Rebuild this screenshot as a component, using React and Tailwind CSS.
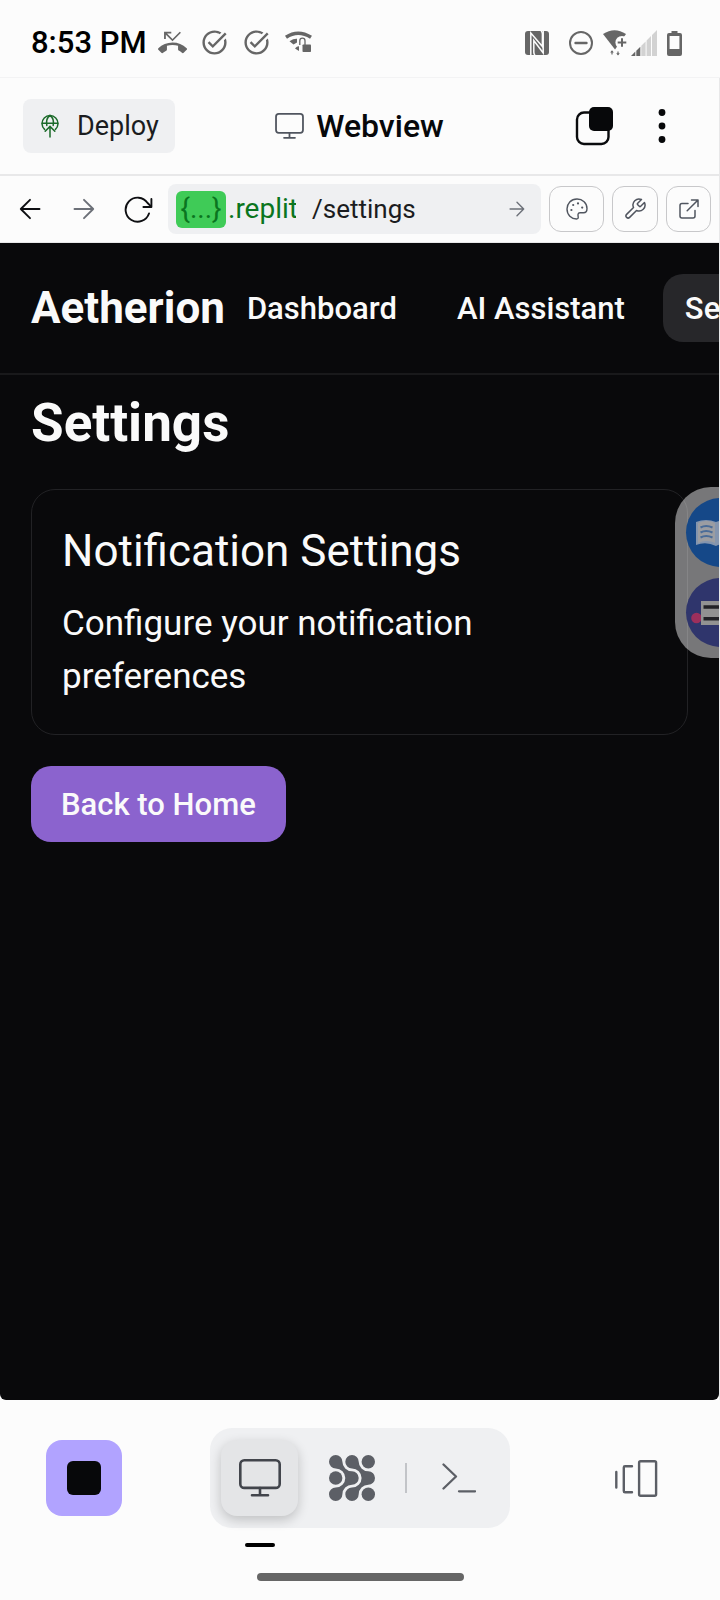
import React from "react";
import { MdPhoneMissed, MdTaskAlt } from "react-icons/md";

function WifiLockIcon() {
  return (
    <svg className="size-[29px]" viewBox="0 0 29 29" fill="none" aria-hidden="true">
      <path d="M2 9.3Q14 1.200 27 9.3" stroke="#666" strokeWidth="3.600" />
      <path d="M5.5 13.2Q9.500 10.6 13 10.8L13 14.500L9.5 16.5Z" fill="#666" />
      <path d="M11 20.5Q13 18 15 18.2V23Z" fill="#666" />
      <path d="M15.800 17V12.8A2.6 2.6 0 0 1 21 12.8V18" stroke="#666" strokeWidth="1.3" />
      <rect x="18.500" y="16.500" width="8.500" height="7.5" rx="0.8" fill="#666" />
    </svg>
  );
}

function NfcIcon() {
  return (
    <svg className="size-6" viewBox="0 0 24 24" aria-hidden="true">
      <rect width="24" height="24" rx="3" fill="#666" />
      <g fill="none" stroke="#fcfcfc" strokeWidth="1.5">
        <path d="M5.800 24V2L17.400 15.500V3Q17.400 1 16 0" />
        <path d="M18.200 0V22L8.800 9.500V21Q8.800 23 10 24" />
      </g>
    </svg>
  );
}

function DndIcon() {
  return (
    <svg className="size-6" viewBox="0 0 24 24" fill="none" stroke="#666" aria-hidden="true">
      <circle cx="12" cy="12" r="11" strokeWidth="2" />
      <path d="M6.5 12H17.5" strokeWidth="2.4" strokeLinecap="round" />
    </svg>
  );
}

function WifiPlusIcon() {
  return (
    <svg className="h-[26px] w-6" viewBox="0 0 24 26" aria-hidden="true">
      <path d="M0 4Q11.5 -3.6 23 4L12 19.5Z" fill="#666" />
      <circle cx="19" cy="12.5" r="6.6" fill="#fcfcfc" />
      <path d="M19 8.2V16.8M14.7 12.5H23.3" stroke="#666" strokeWidth="2" />
      <path d="M9 24.5V21.5M15 21.5V24.5" stroke="#666" strokeWidth="1.2" />
      <path d="M7.2 22.5L9 20.3L10.8 22.5ZM13.2 23.3L15 25.5L16.8 23.3Z" fill="#666" />
    </svg>
  );
}

function SignalIcon() {
  return (
    <svg className="h-[26px] w-[26px]" viewBox="0 0 26 26" aria-hidden="true">
      <path d="M0 26L4.3 21.6V26Z" fill="#666" />
      <path d="M5.3 20.7L9.3 16.7V26H5.3Z" fill="#666" />
      <path d="M10.3 15.700L14.6 11.4V26H10.3ZM15.600 10.400L20 6V26H15.600ZM21 5L26 0V26H21Z" fill="#d2d2d2" />
    </svg>
  );
}

function BatteryIcon() {
  return (
    <svg className="h-[26px] w-[15px]" viewBox="0 0 15 26" aria-hidden="true">
      <path d="M4.5 1H10.5V3H13A2 2 0 0 1 15 5V24A2 2 0 0 1 13 26H2A2 2 0 0 1 0 24V5A2 2 0 0 1 2 3H4.5Z" fill="#666" />
      <rect x="2.6" y="6" width="9.8" height="13" fill="#fcfcfc" />
    </svg>
  );
}

function DeployIcon() {
  return (
    <svg className="h-6 w-[18px]" viewBox="0 0 18 24" fill="none" stroke="#1b6a2a" strokeWidth="1.5" strokeLinecap="round" aria-hidden="true">
      <path d="M3.6 15.4A8 8 0 1 1 14.4 15.4" />
      <path d="M1.2 9.2H16.8M5.8 11.5C5 6.5 6.6 3 9 1.5C11.4 3 13 6.5 12.2 11.5" />
      <path d="M9 23V12.6M4.2 17.2L9 12.4L13.8 17.2" />
    </svg>
  );
}

function MonitorIcon({ className }) {
  return (
    <svg className={className} viewBox="0 0 42 38" fill="none" stroke="currentColor" strokeLinecap="round" aria-hidden="true">
      <rect x="1.3" y="1.3" width="39.4" height="27.6" rx="4" strokeWidth="2.6" />
      <path d="M21 29V36M13 36.2H29" strokeWidth="2.6" />
    </svg>
  );
}

function TabsIcon() {
  return (
    <svg className="h-[39px] w-[39px]" viewBox="0 0 39 39" aria-hidden="true">
      <rect x="2" y="5.5" width="31.5" height="31.5" rx="7" fill="none" stroke="#0a0b0d" strokeWidth="2.4" />
      <rect x="14" y="0" width="24" height="24" rx="5" fill="#07080a" />
    </svg>
  );
}

function ArrowIcon({ className, flip }) {
  return (
    <svg className={className} viewBox="0 0 22 22" fill="none" stroke="currentColor" strokeWidth="1.9" strokeLinecap="round" strokeLinejoin="round" aria-hidden="true">
      <path d={flip ? "M20.5 11H1.8M11 1.8L1.8 11L11 20.2" : "M1.5 11H20.2M11 1.8L20.2 11L11 20.2"} />
    </svg>
  );
}

function ReloadIcon() {
  return (
    <svg className="h-[27px] w-[29px]" viewBox="0 0 29 27" fill="none" stroke="#0e0f12" strokeWidth="1.9" strokeLinecap="round" strokeLinejoin="round" aria-hidden="true">
      <path d="M25 17.5A12 12 0 1 1 23.6 7L27 10.4" />
      <path d="M27.4 3V11H19.4" />
    </svg>
  );
}

function PaletteIcon() {
  return (
    <svg className="size-[22px]" viewBox="0 0 22 22" fill="none" stroke="#50555f" strokeWidth="1.4" strokeLinejoin="round" aria-hidden="true">
      <path d="M11 1C5 1 1 5.5 1 11C1 16.8 5.4 21 10.6 21C11.9 21 12.4 20.2 12.2 19C11.9 17 11.5 14.8 14 14.8H17.5C19.8 14.8 21 13 21 10.5C21 5 16.6 1 11 1Z" />
      <g fill="#50555f" stroke="none">
        <circle cx="5.4" cy="12" r="1.1" />
        <circle cx="7.2" cy="7" r="1.1" />
        <circle cx="12" cy="5.4" r="1.1" />
        <circle cx="16.2" cy="9.6" r="1.1" />
      </g>
    </svg>
  );
}

function WrenchIcon() {
  return (
    <svg className="size-6" viewBox="0 0 24 24" fill="none" stroke="#50555f" strokeWidth="1.5" strokeLinecap="round" strokeLinejoin="round" aria-hidden="true">
      <path d="M14.7 6.3a1 1 0 0 0 0 1.4l1.6 1.6a1 1 0 0 0 1.4 0l3.77-3.77a6 6 0 0 1-7.94 7.94l-6.91 6.91a2.12 2.12 0 0 1-3-3l6.91-6.91a6 6 0 0 1 7.94-7.94l-3.76 3.76z" />
    </svg>
  );
}

function ExternalIcon() {
  return (
    <svg className="size-5" viewBox="0 0 20 20" fill="none" stroke="#50555f" strokeWidth="1.5" strokeLinecap="round" strokeLinejoin="round" aria-hidden="true">
      <path d="M9 4.5H3A2 2 0 0 0 1 6.5V17A2 2 0 0 0 3 19H14A2 2 0 0 0 16 17V11.5" />
      <path d="M12.5 1H19V7.5M19 1L8.2 11.8" />
    </svg>
  );
}

function AgentIcon() {
  return (
    <svg className="size-[46px]" viewBox="0 0 46 46" fill="#5c5f66" aria-hidden="true">
      <circle cx="6.7" cy="23" r="6.7" />
      <circle cx="39.3" cy="6.7" r="6.7" />
      <circle cx="39.3" cy="39.3" r="6.7" />
      <path d="M13.4 6.7A9.6 9.6 0 0 0 23 16.3A6.7 6.7 0 0 1 23 29.7A9.6 9.6 0 0 0 13.4 39.3A6.7 6.7 0 1 1 6.7 32.6A9.6 9.6 0 0 0 6.7 13.4A6.7 6.7 0 1 1 13.4 6.7Z" />
      <path d="M29.7 6.7A9.6 9.6 0 0 0 39.3 16.3A6.7 6.7 0 0 1 39.3 29.7A9.6 9.6 0 0 0 29.7 39.3A6.7 6.7 0 1 1 23 32.6A9.6 9.6 0 0 0 23 13.4A6.7 6.7 0 1 1 29.7 6.7Z" />
    </svg>
  );
}

function PromptIcon() {
  return (
    <svg className="h-[30px] w-[34px]" viewBox="0 0 34 30" fill="none" stroke="#5c5f66" strokeWidth="2.3" strokeLinecap="round" strokeLinejoin="round" aria-hidden="true">
      <path d="M1.5 1.5L14 13.5L1.5 25.5M17 28.3H33" />
    </svg>
  );
}

function PanesIcon() {
  return (
    <svg className="h-[37px] w-[43px]" viewBox="0 0 43 37" fill="none" stroke="#5c5f66" strokeWidth="2.4" strokeLinecap="round" strokeLinejoin="round" aria-hidden="true">
      <rect x="24.1" y="1.3" width="17" height="34.4" rx="1.5" />
      <path d="M17 6.3H10Q8.8 6.3 8.8 7.5V31Q8.8 32.3 10 32.3H17M1.3 12V27.5" />
    </svg>
  );
}

function BookIcon() {
  return (
    <svg className="h-7 w-10" viewBox="0 0 40 28" aria-hidden="true">
      <path d="M0 3Q10 -1 20 3Q30 -1 40 3V26Q30 22 20 27Q10 22 0 26Z" fill="#8495ae" />
      <path d="M2 4Q11 0 19 4V24Q11 20 2 24Z" fill="#9b9da2" />
      <path d="M4.500 8.5Q10 5.5 16.5 8.5M4.500 13.5Q10 10.5 16.5 13.5M4.500 18.5Q10 15.5 16.5 18.5" fill="none" stroke="#4a6c98" strokeWidth="2" />
    </svg>
  );
}

function ListIcon() {
  return (
    <svg className="h-6 w-[50px]" viewBox="0 0 50 24" aria-hidden="true">
      <circle cx="5.5" cy="17" r="5.3" fill="#9c2f5c" />
      <path d="M10 0H50V24H10Z" fill="#929292" />
      <path d="M12.5 6H50M12.5 17.7H50" stroke="#222226" strokeWidth="3.4" />
    </svg>
  );
}

const outlineButton = "flex h-[46px] shrink-0 items-center justify-center rounded-xl border border-[#c8c8ca]";
const navLink = "flex h-[68px] shrink-0 items-center whitespace-nowrap rounded-[20px] px-[22px] text-[31px] leading-none font-medium";

export default function App() {
  return (
    <div className="flex min-h-screen flex-col overflow-hidden bg-[#fcfcfc] font-['Roboto',sans-serif] text-[#07080a]">
      <div className="flex h-[78px] items-center justify-between border-b border-[#f3f3f4] pt-2 pr-[38px] pl-[31px]">
        <div className="flex items-center gap-[11px] text-[#666]">
          <time className="text-[31px] leading-none font-medium whitespace-nowrap text-black">8:53 PM</time>
          <div className="flex items-center gap-[13px]">
            <MdPhoneMissed className="size-[29px]" />
            <MdTaskAlt className="size-[29px]" />
            <MdTaskAlt className="size-[29px]" />
            <WifiLockIcon />
          </div>
        </div>
        <div className="flex items-center gap-2.5">
          <div className="flex items-center gap-5">
            <NfcIcon />
            <DndIcon />
          </div>
          <div className="flex items-center gap-1">
            <WifiPlusIcon />
            <SignalIcon />
          </div>
          <BatteryIcon />
        </div>
      </div>

      <header className="grid h-[98px] grid-cols-[1fr_auto_1fr] items-center border-r border-b-2 border-[#e8e8e9] px-[23px]">
        <button className="flex h-[54px] items-center gap-[18px] justify-self-start rounded-lg bg-[#eff0f2] pr-4 pl-[18px] text-[27px] leading-none text-[#1b1c20]">
          <DeployIcon />
          Deploy
        </button>
        <h2 className="flex items-center gap-3 text-[32px] leading-none font-medium">
          <MonitorIcon className="h-[26px] w-[29px] text-[#50555f]" />
          Webview
        </h2>
        <div className="flex items-center gap-[38px] justify-self-end pr-6">
          <button aria-label="Tabs">
            <TabsIcon />
          </button>
          <button aria-label="More options" className="flex w-5 justify-center">
            <svg className="h-9 w-2" viewBox="0 0 8 36" fill="#07080a" aria-hidden="true">
              <circle cx="4" cy="4.5" r="3.4" />
              <circle cx="4" cy="18" r="3.4" />
              <circle cx="4" cy="31.5" r="3.4" />
            </svg>
          </button>
        </div>
      </header>

      <div className="flex h-[67px] items-center gap-2 border-r border-b border-[#e8e8e9] pr-2 pl-[3px]">
        <div className="flex shrink-0">
          <button aria-label="Back" className="flex h-[50px] w-[54px] items-center justify-center">
            <ArrowIcon flip className="size-[22px] text-[#0e0f12]" />
          </button>
          <button aria-label="Forward" className="flex h-[50px] w-[54px] items-center justify-center">
            <ArrowIcon className="size-[22px] text-[#6c7078]" />
          </button>
          <button aria-label="Reload" className="flex h-[50px] w-[49px] items-center justify-center pl-[5px]">
            <ReloadIcon />
          </button>
        </div>
        <form className="flex h-[50px] min-w-0 flex-1 items-center rounded-lg bg-[#eff0f2] pr-4 pl-2 text-[26px] leading-none">
          <label htmlFor="path" className="flex w-[120px] shrink-0 items-center overflow-hidden whitespace-nowrap text-[28px] text-[#0a7520]">
            <span className="mr-0.5 flex h-[37px] w-[50px] shrink-0 items-center justify-center rounded-md bg-[#3fcb57]">
              {"{...}"}
            </span>
            .replit
          </label>
          <input id="path" defaultValue="/settings" className="ml-4 w-0 min-w-0 flex-1 bg-transparent text-[#1b1c20] outline-none" />
          <button type="button" aria-label="Go">
            <ArrowIcon className="size-4 text-[#6c7078]" />
          </button>
        </form>
        <button aria-label="Theme" className={`${outlineButton} w-[55px]`}>
          <PaletteIcon />
        </button>
        <button aria-label="Developer tools" className={`${outlineButton} w-[46px]`}>
          <WrenchIcon />
        </button>
        <button aria-label="Open in new tab" className={`${outlineButton} w-[45px]`}>
          <ExternalIcon />
        </button>
      </div>

      <div className="flex flex-1 flex-col border-r border-[#e8e8e9]">
        <div className="relative flex-1 overflow-hidden rounded-b-md bg-[#09090b] text-[#fafafa]">
          <nav className="flex h-[132px] items-center overflow-hidden border-b-2 border-[#19191b] pl-[31px]">
            <a href="#home" className="shrink-0 text-[44px] leading-none font-bold">Aetherion</a>
            <div className="flex shrink-0 gap-4">
              <a href="#dashboard" className={navLink}>Dashboard</a>
              <a href="#assistant" className={navLink}>AI Assistant</a>
              <a href="#settings" className={`${navLink} bg-[#27272a]`}>Settings</a>
            </div>
          </nav>
          <main className="px-[31px] pt-5">
            <h1 className="text-[53px] leading-[56px] font-bold">Settings</h1>
            <section className="mt-[38px] rounded-3xl border border-[#222225] px-[30px] py-[31px]">
              <h2 className="text-[44px] leading-[60px]">Notification Settings</h2>
              <p className="mt-4 text-[35px] leading-[53px]">Configure your notification preferences</p>
            </section>
            <button className="mt-[31px] flex h-[76px] items-center rounded-[20px] bg-[#8b63ce] px-[30px] text-[31px] leading-none font-medium">
              Back to Home
            </button>
          </main>
          <aside className="absolute top-[244px] right-0 flex w-11 flex-col gap-[11px] overflow-hidden rounded-l-[36px] bg-white/45 py-[11px] pl-[11px]">
            <button aria-label="Reader" className="flex size-[69px] shrink-0 items-center rounded-full bg-[#154888] pl-2.5">
              <BookIcon />
            </button>
            <button aria-label="Reading list" className="flex size-[69px] shrink-0 items-center overflow-hidden rounded-full bg-[#2f356c] pl-[5px]">
              <ListIcon />
            </button>
          </aside>
        </div>
      </div>

      <footer className="flex h-[200px] flex-col items-center pt-7">
        <div className="flex w-full items-center justify-between px-[46px]">
          <button aria-label="Stop" className="flex size-[76px] items-center justify-center rounded-2xl bg-[#b1a3ff]">
            <span className="size-[34px] rounded-md bg-[#07080a]" />
          </button>
          <div className="flex h-[100px] w-[300px] items-center rounded-[22px] bg-[#eff0f2] pl-[11px]">
            <div className="relative">
              <button aria-label="Webview" className="flex h-[76px] w-[77px] items-center justify-center rounded-2xl bg-[#e4e5e7] text-[#42454c] shadow-[0_4px_12px_rgba(0,0,0,0.2)]">
                <MonitorIcon className="h-[38px] w-[42px]" />
              </button>
              <span className="absolute top-[103px] left-6 h-1 w-[30px] rounded-full bg-black" />
            </div>
            <button aria-label="Agent" className="flex h-[76px] w-[107px] items-center justify-center">
              <AgentIcon />
            </button>
            <span className="h-[30px] w-0.5 bg-[#c2c4c8]" />
            <button aria-label="Console" className="flex h-[76px] flex-1 items-center justify-center">
              <PromptIcon />
            </button>
          </div>
          <button aria-label="Panes" className="flex size-[76px] items-center justify-center">
            <PanesIcon />
          </button>
        </div>
        <div className="mt-[45px] h-2 w-[207px] rounded-full bg-[#666]" />
      </footer>
    </div>
  );
}
